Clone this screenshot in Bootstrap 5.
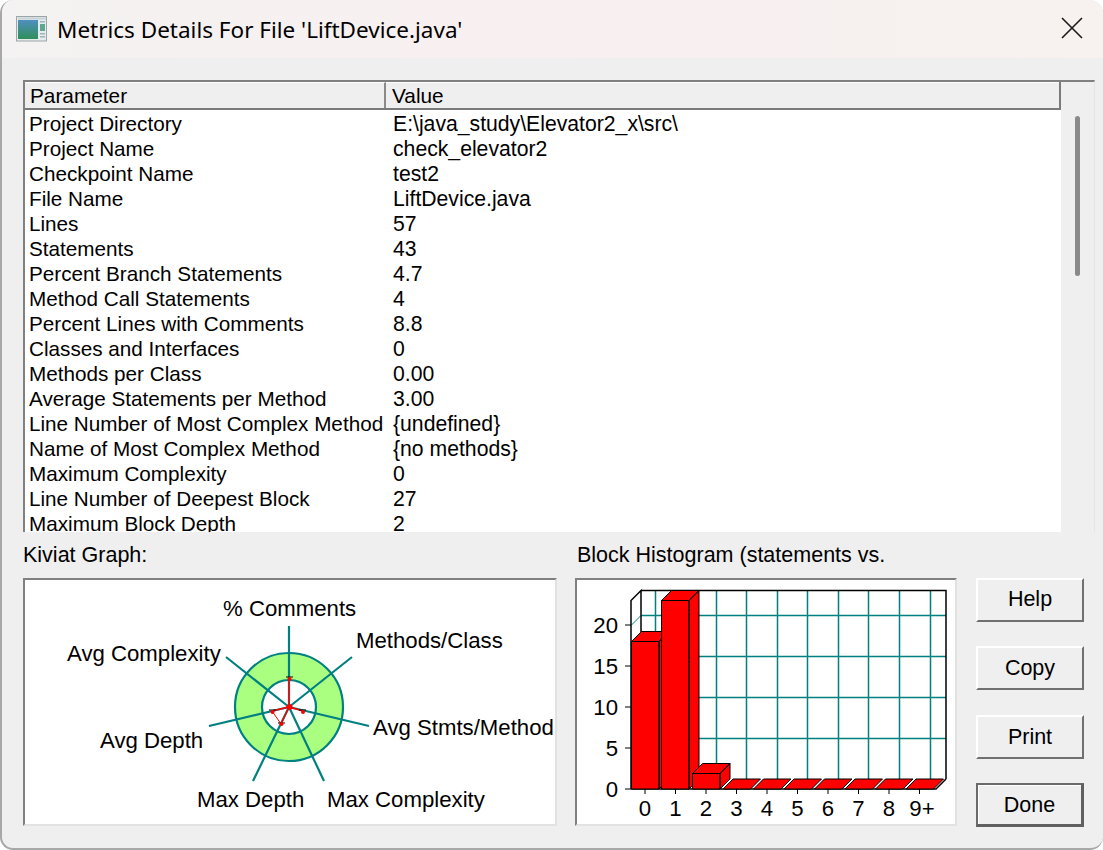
<!DOCTYPE html>
<html lang="en">
<head>
<meta charset="utf-8">
<title>Metrics Details</title>
<link href="https://cdn.jsdelivr.net/npm/bootstrap@5.3.0/dist/css/bootstrap.min.css" rel="stylesheet">
<style>
html,body{height:100%;margin:0;background:#fff}
body{font-family:"Liberation Sans",Arial,sans-serif;font-size:21.5px;color:#000;overflow:hidden}
.dlg{width:1103px;height:850px;background:#efefef;border:1px solid #a8a8a8;border-width:0 0 2px 2px;border-radius:13px;overflow:hidden}
.dlg-title{height:58px;padding:0 19px 0 14px;background:linear-gradient(90deg,#f4f2f2,#f8f0f0 40%,#f7f1f0);font-family:"Noto Sans",sans-serif;font-size:22.5px}
.dlg-title .cap{margin-left:9px;padding-top:2px;white-space:nowrap}
.closer{width:24px;height:24px;background:none;border:0;padding:0;margin-bottom:16px}
.dlg-main{padding:22px 8px 0 21px}
.lst{height:452px;border-top:2px solid #808080;border-left:2px solid #808080;border-right:1px solid #e4e4e4;background:#efefef;overflow:hidden}
.lst-body{width:1036px;height:450px;background:#fff;overflow:hidden}
.lst-head{height:28px;background:#efefef;border-bottom:2px solid #7a7a7a;border-right:2px solid #7a7a7a;line-height:26px;font-size:20.8px}
.lst-head .c1{width:361px;border-right:2px solid #8a8a8a;padding-left:5px;border-top:1px solid #fff}
.lst-head .c2{flex:1;padding-left:6px;border-top:1px solid #fff}
.tbl-m{table-layout:fixed;width:1036px;margin:1px 0 0;--bs-table-bg:transparent}
.tbl-m td{padding:0 0 0 4px;height:25px;line-height:25px;white-space:nowrap;font-size:20.7px;color:#000;box-shadow:none}
.tbl-m td+td{padding-left:6px;font-size:21.2px}
.tbl-m col.a1{width:362px}
.scr{flex:1;padding:34px 0 0 14px}
.scr i{display:block;width:5px;height:160px;border-radius:3px;background:#8a8a8a}
.cap-row{height:46px;line-height:46px}
.kv{width:534px}
.hs{width:382px;margin-left:18px}
.hs .cap-row{padding-left:2px}
.pane{height:248px;background:#fff;border:2px solid;border-color:#808080 #e2e2e2 #e2e2e2 #808080}
.pane svg{display:block}
.pane text{font-family:"Liberation Sans",Arial,sans-serif;font-size:22.2px;fill:#000}
.side{width:108px;margin-left:19px;padding-top:46px;height:295px}
.side .btn{height:44px;width:108px;background:#efefef;border:2px solid;border-color:#fff #707070 #707070 #fff;border-radius:0;padding:0;font-size:21.5px;color:#000;font-family:"Liberation Sans",Arial,sans-serif}
.side .btn:first-child{padding-bottom:2px}
.side .btn.dft{border-width:2px 3px 3px 2px;border-color:#6a6a6a #606060 #606060 #6a6a6a;box-shadow:inset 1px 1px 0 #fff;padding-top:1px}
</style>
</head>
<body>
<div class="dlg d-flex flex-column">
  <div class="dlg-title d-flex align-items-center justify-content-between">
    <div class="d-flex align-items-center">
      <svg width="32" height="26" viewBox="0 0 32 26"><defs><linearGradient id="ig" x1="0" y1="0" x2="0" y2="1"><stop offset="0" stop-color="#4f8fc0"/><stop offset="1" stop-color="#2f8f5a"/></linearGradient></defs><rect x=".5" y=".5" width="30" height="24.5" fill="#e6ecee" stroke="#9aa5a8"/><rect x="2" y="4" width="20" height="19" fill="url(#ig)"/><rect x="2" y="1.500" width="28" height="2" fill="#c9d2d5"/><rect x="24" y="5" width="5" height="1.500" fill="#9fb4b8"/><rect x="24" y="8" width="5" height="7" fill="#5fa68e"/><rect x="24" y="17" width="5" height="1.500" fill="#9fb4b8"/><rect x="24" y="20" width="5" height="1.500" fill="#9fb4b8"/></svg>
      <span class="cap">Metrics Details For File 'LiftDevice.java'</span>
    </div>
    <button class="closer" type="button" aria-label="Close"><svg width="24" height="24" viewBox="0 0 24 24"><path d="M2 2 22 22M22 2 2 22" stroke="#1a1a1a" stroke-width="1.600" fill="none"/></svg></button>
  </div>
  <div class="dlg-main">
    <div class="lst d-flex">
      <div class="lst-body">
        <div class="lst-head d-flex"><div class="c1">Parameter</div><div class="c2">Value</div></div>
        <table class="table table-borderless tbl-m">
          <colgroup><col class="a1"><col></colgroup>
          <tbody>
          <tr><td>Project Directory</td><td>E:\java_study\Elevator2_x\src\</td></tr>
          <tr><td>Project Name</td><td>check_elevator2</td></tr>
          <tr><td>Checkpoint Name</td><td>test2</td></tr>
          <tr><td>File Name</td><td>LiftDevice.java</td></tr>
          <tr><td>Lines</td><td>57</td></tr>
          <tr><td>Statements</td><td>43</td></tr>
          <tr><td>Percent Branch Statements</td><td>4.7</td></tr>
          <tr><td>Method Call Statements</td><td>4</td></tr>
          <tr><td>Percent Lines with Comments</td><td>8.8</td></tr>
          <tr><td>Classes and Interfaces</td><td>0</td></tr>
          <tr><td>Methods per Class</td><td>0.00</td></tr>
          <tr><td>Average Statements per Method</td><td>3.00</td></tr>
          <tr><td>Line Number of Most Complex Method</td><td>{undefined}</td></tr>
          <tr><td>Name of Most Complex Method</td><td>{no methods}</td></tr>
          <tr><td>Maximum Complexity</td><td>0</td></tr>
          <tr><td>Line Number of Deepest Block</td><td>27</td></tr>
          <tr><td>Maximum Block Depth</td><td>2</td></tr>
          </tbody>
        </table>
      </div>
      <div class="scr"><i></i></div>
    </div>
    <div class="d-flex">
      <div class="kv ms-0">
        <div class="cap-row">Kiviat Graph:</div>
        <div class="pane">
          <svg width="530" height="244" viewBox="26 580 530 244">
            <circle cx="290" cy="707" r="54" fill="#aaff80" stroke="#008080" stroke-width="2.200"/>
            <circle cx="290" cy="707" r="27" fill="#fff" stroke="#008080" stroke-width="2.200"/>
            <g stroke="#008080" stroke-width="2.200" fill="none">
              <path d="M290 707V626M290 707 353 657M290 707 370 726M290 707 325 781M290 707 254 781M290 707 210 726M290 707 227 657"/>
            </g>
            <g stroke="#f00" fill="none">
              <path d="M290 707V678M290 707 304 711M290 707 282 724M290 707 273 711" stroke-width="1.500"/>
              <path d="M273 711 282 724" stroke-width="1"/>
            </g>
            <circle cx="290.500" cy="707" r="3" fill="#f00"/>
            <g stroke="#000" stroke-width="1"><path d="M287 677h7M300 710h7M270 710h7M279 723h7"/></g>
            <g fill="#f00"><circle cx="290.500" cy="679" r="2"/><circle cx="304" cy="712" r="2"/><circle cx="273.500" cy="712" r="2"/><circle cx="282.500" cy="724" r="2"/></g>
            <text x="224" y="616">% Comments</text>
            <text x="357" y="648">Methods/Class</text>
            <text x="68" y="661">Avg Complexity</text>
            <text x="374" y="735">Avg Stmts/Method</text>
            <text x="101" y="748">Avg Depth</text>
            <text x="198" y="807">Max Depth</text>
            <text x="328" y="807">Max Complexity</text>
          </svg>
        </div>
      </div>
      <div class="hs">
        <div class="cap-row text-nowrap">Block Histogram (statements vs.</div>
        <div class="pane">
          <svg width="378" height="244" viewBox="577 580 378 244">
            <g stroke="#008080" stroke-width="1.500" fill="none">
              <path d="M655.500 590V779M685.500 590V779M716.500 590V779M746.500 590V779M777.500 590V779M807.500 590V779M838.500 590V779M868.500 590V779M899.500 590V779M930.500 590V779"/>
              <path d="M641 615.500H946M641 656.500H946M641 697.500H946M641 738.500H946"/>
              <path d="M631 625.500 641 615.500" stroke-width="1"/>
            </g>
            <g stroke="#000" stroke-width="1.500" fill="none">
              <path d="M631 789V600.500L641 590.500V779M641 590.500H946V779M946 779 936 789H631"/>
              <path d="M625 789h6M625 748h6M625 707h6M625 666h6M625 625h6M645 789v5M675.500 789v5M706 789v5M736.500 789v5M767 789v5M797.500 789v5M828 789v5M858.500 789v5M889 789v5M919.500 789v5" stroke-width="1"/>
            </g>
            <g fill="#f00" stroke="#000" stroke-width="1" stroke-linejoin="round">
              <path d="M723 789 733 779H760.500L750.500 789Z"/>
              <path d="M753.500 789 763.500 779H791L781 789Z"/>
              <path d="M784 789 794 779H821.500L811.500 789Z"/>
              <path d="M814.500 789 824.500 779H852L842 789Z"/>
              <path d="M845 789 855 779H882.500L872.500 789Z"/>
              <path d="M875.500 789 885.500 779H913L903 789Z"/>
              <path d="M906 789 916 779H943.500L933.500 789Z"/>
              <path d="M631.500 641.500H659V789H631.500ZM631.500 641.500 641.500 631.500H669L659 641.500ZM659 641.500 669 631.500V779L659 789Z"/>
              <path d="M661.500 600.500H689V789H661.500ZM661.500 600.500 671.500 590.500H699L689 600.500ZM689 600.500 699 590.500V779L689 789Z"/>
              <path d="M692.500 773.500H720V789H692.500ZM692.500 773.500 702.500 763.500H730L720 773.500ZM720 773.500 730 763.500V779L720 789Z"/>
            </g>
            <g text-anchor="end">
              <text x="618" y="633">20</text><text x="618" y="674">15</text><text x="618" y="715">10</text><text x="618" y="756">5</text><text x="618" y="797">0</text>
            </g>
            <g text-anchor="middle">
              <text x="645" y="816">0</text><text x="675.500" y="816">1</text><text x="706" y="816">2</text><text x="736.500" y="816">3</text><text x="767" y="816">4</text><text x="797.500" y="816">5</text><text x="828" y="816">6</text><text x="858.500" y="816">7</text><text x="889" y="816">8</text><text x="922" y="816">9+</text>
            </g>
          </svg>
        </div>
      </div>
      <div class="side d-flex flex-column justify-content-between">
        <button class="btn" type="button">Help</button>
        <button class="btn" type="button">Copy</button>
        <button class="btn" type="button">Print</button>
        <button class="btn dft" type="button">Done</button>
      </div>
    </div>
  </div>
</div>
<script src="https://cdn.jsdelivr.net/npm/bootstrap@5.3.0/dist/js/bootstrap.bundle.min.js"></script>
</body>
</html>
